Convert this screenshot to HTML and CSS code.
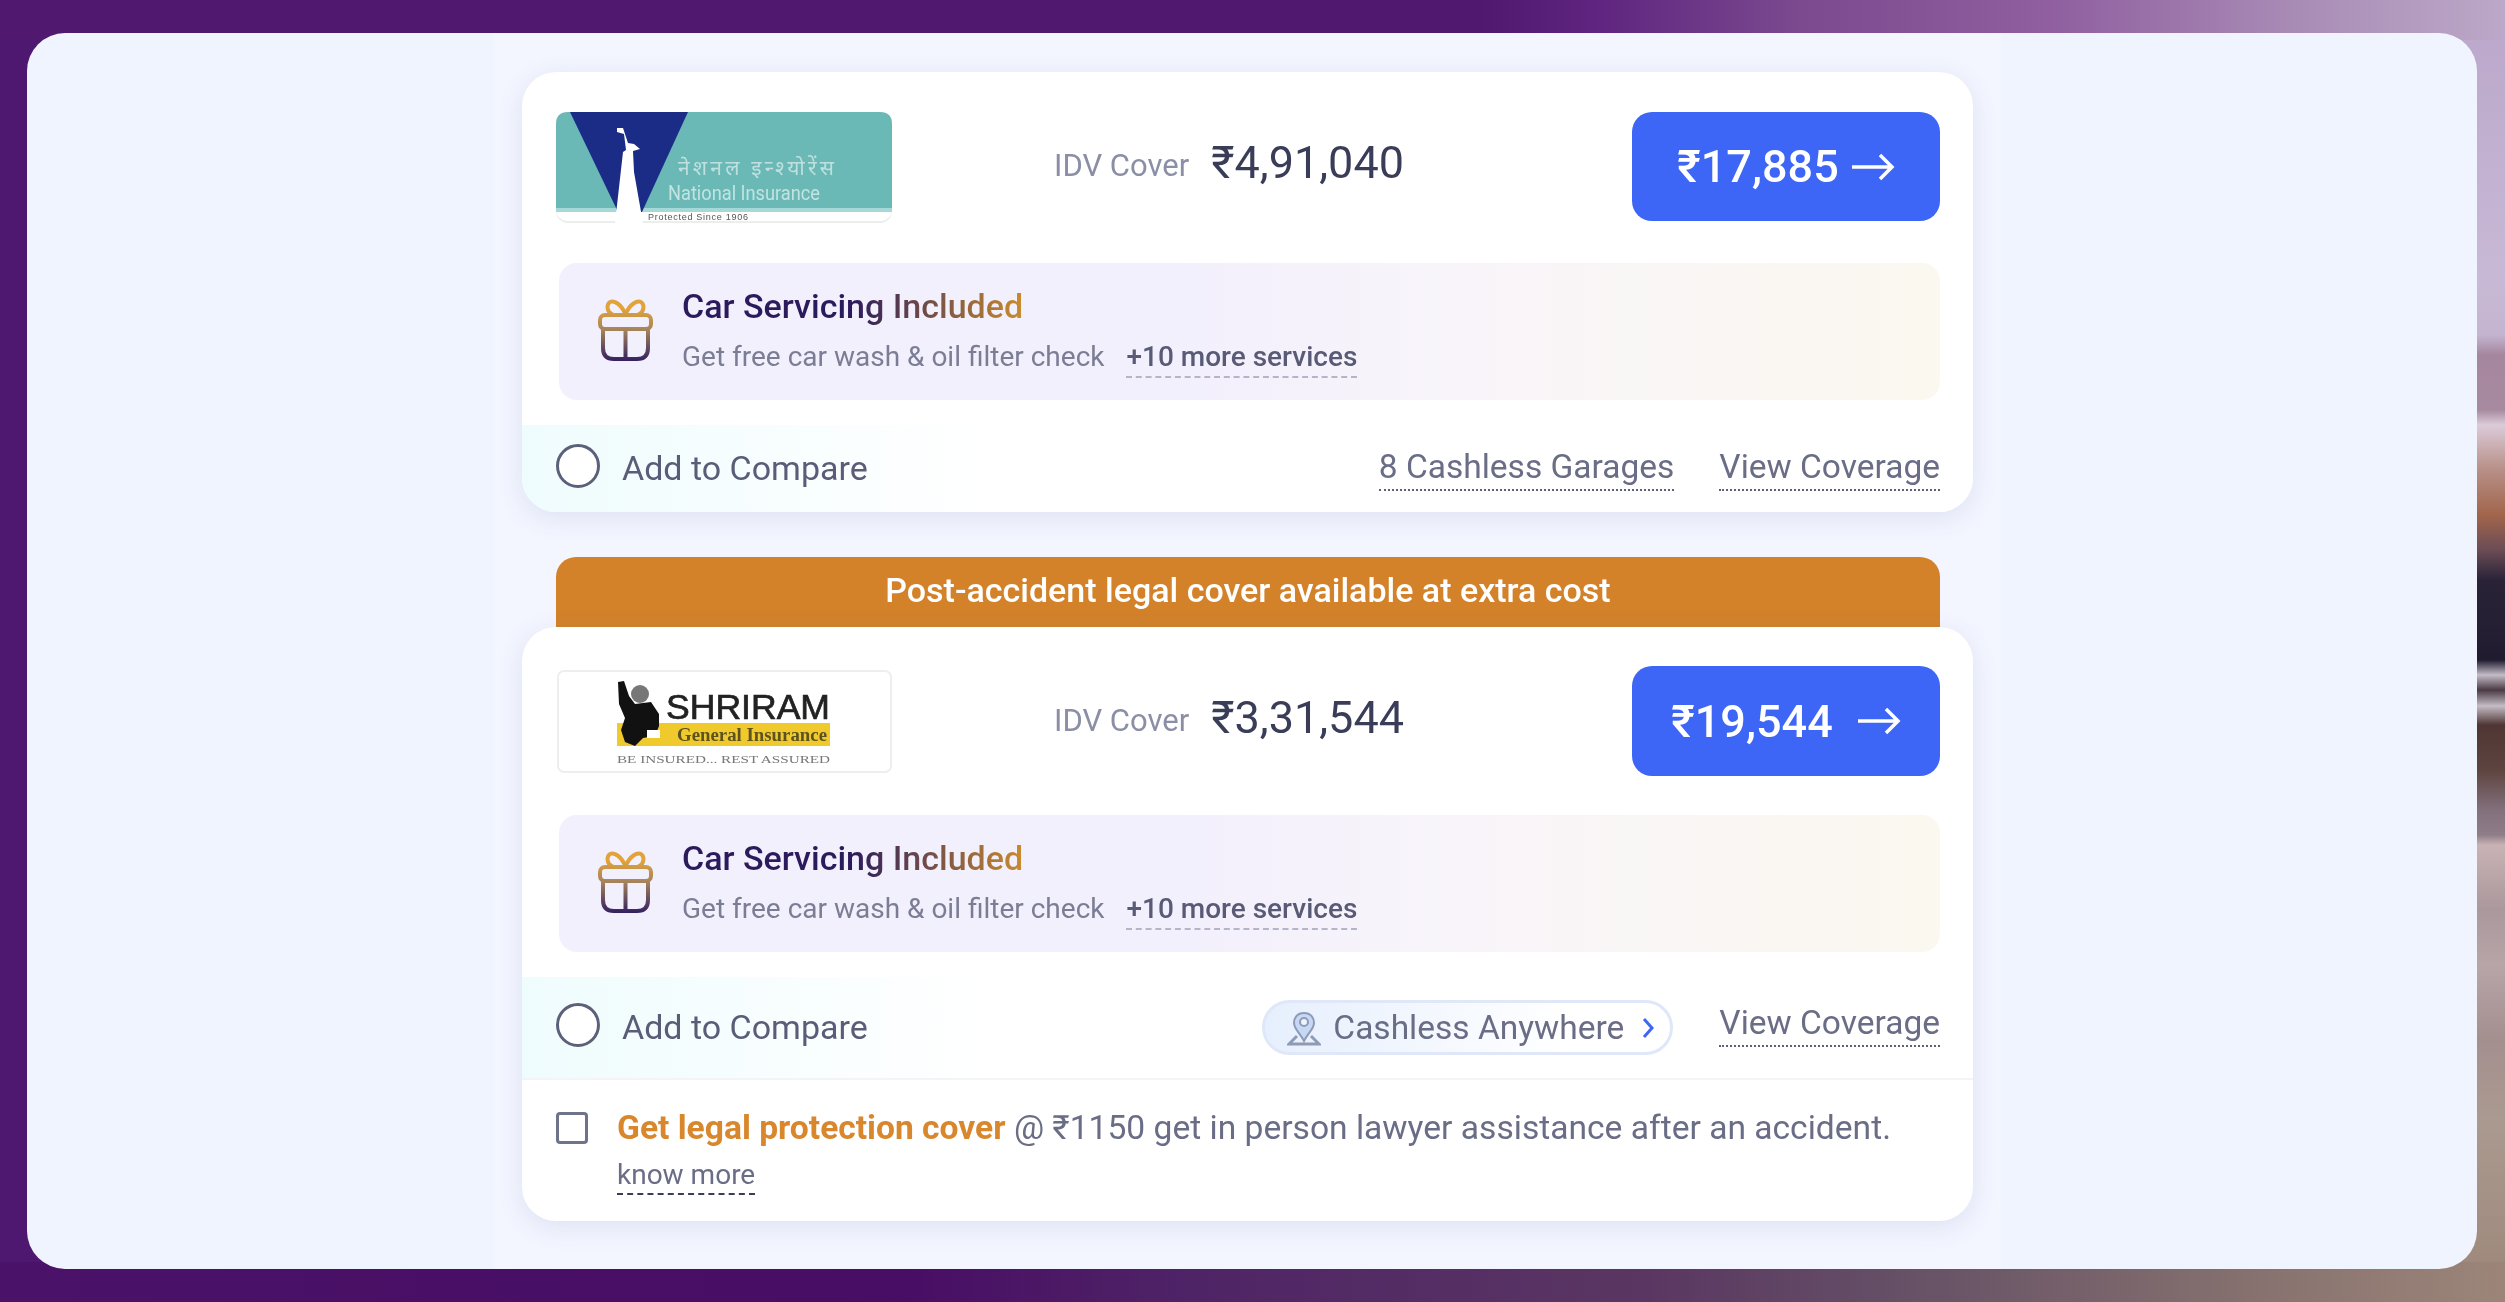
FILE: index.html
```html
<!DOCTYPE html>
<html lang="en">
<head>
    <meta charset="UTF-8">
    <title>Car Insurance Quotes</title>
    <link rel="stylesheet" href="styles.css">
</head>
<body>
    <svg class="defs" width="0" height="0">
        <defs>
            <linearGradient id="gift-grad" gradientUnits="userSpaceOnUse" x1="0" y1="0" x2="0" y2="62">
                <stop offset="0.15" stop-color="#e2a43a"/>
                <stop offset="0.5" stop-color="#a5835c"/>
                <stop offset="1" stop-color="#33205f"/>
            </linearGradient>
            <symbol id="gift" viewBox="0 0 55 62">
                <g fill="none" stroke="url(#gift-grad)" stroke-width="4" stroke-linejoin="round" stroke-linecap="round">
                    <path d="M27.5 15 C23 5 16 1 12 3 C8 6 9 13 14 15"/>
                    <path d="M27.5 15 C32 5 39 1 43 3 C47 6 46 13 41 15"/>
                    <rect x="2" y="16" width="51" height="14" rx="5"/>
                    <path d="M5 31 V49 Q5 60 16 60 H39 Q50 60 50 49 V31"/>
                    <path d="M27.5 31 V60"/>
                </g>
            </symbol>
        </defs>
    </svg>

    <main class="panel">
        <div class="column">

            <!-- National Insurance quote -->
            <section class="card">
                <div class="quote-row">
                    <svg class="logo" viewBox="0 0 336 111">
                        <rect width="336" height="111" rx="12" fill="#eceeee"/>
                        <rect y="0" width="336" height="109" rx="12" fill="#fff"/>
                        <path d="M12 0 H324 Q336 0 336 12 V96 H0 V12 Q0 0 12 0 Z" fill="#6ab9b6"/>
                        <rect y="96" width="336" height="4" fill="#a5d8d6"/>
                        <path d="M14 0 H132 L86 100 H62 Z" fill="#1b2c86"/>
                        <path d="M59 111 L67 40 L70 38 L68 22 L61 20 L61 16 L67 16 L72 31 L78 32 L84 37 L77 39 L78 60 L87 111 Z" fill="#fff"/>
                        <text class="logo-hindi" x="122" y="63" textLength="156">नेशनल इन्श्योरेंस</text>
                        <text class="logo-name" x="112" y="88" textLength="152" lengthAdjust="spacingAndGlyphs">National Insurance</text>
                        <text class="logo-tiny" x="92" y="108" textLength="100">Protected Since 1906</text>
                    </svg>
                    <div class="idv">
                        <span class="idv-label">IDV Cover</span>
                        <span class="idv-value">₹4,91,040</span>
                    </div>
                    <button class="price-btn">
                        <span>₹17,885</span>
                        <svg class="arrow" viewBox="0 0 44 30"><path d="M1 15 H41 M29 3 L41 15 L29 27"/></svg>
                    </button>
                </div>

                <div class="service-box">
                    <svg class="gift-icon"><use href="#gift"/></svg>
                    <div class="service-text">
                        <div class="service-title">Car Servicing Included</div>
                        <div class="service-sub">
                            <span>Get free car wash &amp; oil filter check</span>
                            <span class="more-link">+10 more services</span>
                        </div>
                    </div>
                </div>

                <div class="compare-row">
                    <span class="radio"></span>
                    <span class="compare-label">Add to Compare</span>
                    <span class="compare-links">
                        <a class="dotted-link">8 Cashless Garages</a>
                        <a class="dotted-link">View Coverage</a>
                    </span>
                </div>
            </section>

            <div class="legal-banner">Post-accident legal cover available at extra cost</div>

            <!-- Shriram quote -->
            <section class="card card-second">
                <div class="quote-row">
                    <svg class="logo logo-boxed" viewBox="0 0 335 103">
                        <rect x="1" y="1" width="333" height="101" rx="6" fill="#fff" stroke="#eeeeee" stroke-width="2"/>
                        <rect x="60" y="53" width="213" height="23" fill="#f0c92c"/>
                        <path d="M61 12 L67 11 L72 26 L78 34 L94 32 L102 44 L102 56 L98 66 L86 68 L78 76 L68 72 L64 60 L68 48 L62 34 Z" fill="#111"/>
                        <circle cx="83" cy="24" r="9" fill="#777"/>
                        <rect x="90" y="60" width="13" height="8" fill="#fff"/>
                        <text class="logo-shriram" x="109" y="49" textLength="164" lengthAdjust="spacingAndGlyphs">SHRIRAM</text>
                        <text class="logo-general" x="120" y="71" textLength="150" lengthAdjust="spacingAndGlyphs">General Insurance</text>
                        <text class="logo-tagline" x="60" y="93" textLength="213" lengthAdjust="spacingAndGlyphs">BE INSURED... REST ASSURED</text>
                    </svg>
                    <div class="idv">
                        <span class="idv-label">IDV Cover</span>
                        <span class="idv-value">₹3,31,544</span>
                    </div>
                    <button class="price-btn price-btn-wide">
                        <span>₹19,544</span>
                        <svg class="arrow" viewBox="0 0 44 30"><path d="M1 15 H41 M29 3 L41 15 L29 27"/></svg>
                    </button>
                </div>

                <div class="service-box">
                    <svg class="gift-icon"><use href="#gift"/></svg>
                    <div class="service-text">
                        <div class="service-title">Car Servicing Included</div>
                        <div class="service-sub">
                            <span>Get free car wash &amp; oil filter check</span>
                            <span class="more-link">+10 more services</span>
                        </div>
                    </div>
                </div>

                <div class="compare-row compare-row-tall">
                    <span class="radio"></span>
                    <span class="compare-label">Add to Compare</span>
                    <span class="compare-links">
                        <a class="cashless-pill">
                            <svg class="pin-icon" viewBox="0 0 34 34">
                                <path d="M17 1 C10 1 7 6 7 11 C7 17 13 21 17 29 C21 21 27 17 27 11 C27 6 24 1 17 1 Z" fill="#c7d8f6" stroke="#8d9bb5" stroke-width="2"/>
                                <circle cx="17" cy="10" r="4" fill="#eef3fc" stroke="#8d9bb5" stroke-width="2"/>
                                <path d="M10 24 L2 32 H32 L24 24" fill="none" stroke="#8d9bb5" stroke-width="3"/>
                            </svg>
                            <span>Cashless Anywhere</span>
                            <svg class="chevron" viewBox="0 0 14 22"><path d="M3 2 L11 11 L3 20"/></svg>
                        </a>
                        <a class="dotted-link dotted-link-raised">View Coverage</a>
                    </span>
                </div>

                <div class="legal-row">
                    <span class="checkbox"></span>
                    <div class="legal-text">
                        <p><strong>Get legal protection cover</strong> @ ₹1150 get in person lawyer assistance after an accident.</p>
                        <a class="know-more">know more</a>
                    </div>
                </div>
            </section>

        </div>
    </main>
</body>
</html>
```

FILE: styles.css
```css
* {
    box-sizing: border-box;
}
html, body {
    height: 100%;
}
body {
    margin: 0;
    padding: 33px 28px 33px 27px;
    font-family: Roboto, "Noto Sans", sans-serif;
    background-color: #4e1870;
    background-image:
        linear-gradient(90deg, #50186f 0, #50186f 1480px, #5f2580 1600px, #7b4a8f 1800px, #8f5f9f 2050px, #a98cb6 2300px, #bca8c8 2505px),
        linear-gradient(90deg, #4a1268 0, #480d65 900px, #4f2466 1200px, #5a3762 1650px, #655066 1900px, #86716f 2250px, #9c8578 2505px),
        linear-gradient(180deg, #baa6c9 0, #c8b9d6 280px, #c4b4cf 335px, #a5869f 355px, #a88a9f 410px, #dccbd9 425px, #b78f87 470px, #a2654b 515px, #6b4c55 550px, #2a2338 580px, #201c30 660px, #c4bcc6 675px, #4a3a44 690px, #c4bcc6 706px, #4f3634 725px, #5e443f 770px, #82707c 810px, #8f7d88 835px, #c8b2b4 845px, #ab989c 910px, #b8a5a8 965px, #a48f8f 1040px, #ab9a90 1120px, #9c8578 1302px);
    background-size: 100% 40px, 100% 40px, 60px 100%;
    background-position: left top, left bottom, right top;
    background-repeat: no-repeat;
}
.defs {
    position: absolute;
}
.panel {
    height: 100%;
    border-radius: 38px;
    background: #f0f4fe;
    display: flex;
    justify-content: center;
    overflow: hidden;
}
.column {
    width: 1507px;
    padding: 39px 28px 0;
    margin-left: -9px;
    background: #f3f6ff;
    filter: blur(0.5px);
}

/* Quote card */
.card {
    height: 440px;
    padding-top: 40px;
    background: #fff;
    border-radius: 34px;
    box-shadow: 0 6px 26px rgba(70, 85, 150, 0.12);
    overflow: hidden;
}
.card-second {
    height: 594px;
    padding-top: 39px;
    position: relative;
}
.quote-row {
    display: flex;
    align-items: center;
    padding: 0 33px 0 34px;
    height: 111px;
}
.card-second .quote-row {
    height: 110px;
}
.logo {
    width: 336px;
    height: 111px;
    flex-shrink: 0;
    filter: blur(0.7px);
}
.logo-boxed {
    width: 335px;
    height: 103px;
    margin-left: 1px;
}
.logo-hindi {
    font-family: "Noto Sans", sans-serif;
    font-size: 21px;
    fill: #bfe0de;
}
.logo-name {
    font-family: Roboto, sans-serif;
    font-size: 21px;
    fill: #c3e3e1;
}
.logo-tiny {
    font-family: "Liberation Sans", sans-serif;
    font-size: 9px;
    fill: #555;
}
.logo-shriram {
    font-family: "Liberation Sans", sans-serif;
    font-size: 35px;
    fill: #222;
    stroke: #222;
    stroke-width: 0.7;
}
.logo-general {
    font-family: "Liberation Serif", serif;
    font-weight: bold;
    font-size: 18px;
    fill: #5c5320;
}
.logo-tagline {
    font-family: "Liberation Serif", serif;
    font-size: 11px;
    fill: #777;
}
.idv {
    margin-left: 162px;
    display: flex;
    align-items: center;
    gap: 22px;
}
.card-second .idv {
    margin-top: 3px;
}
.idv-label {
    font-size: 31px;
    color: #8b8fa6;
    margin-top: -4px;
}
.idv-value {
    font-size: 45px;
    color: #3a3d58;
    margin-top: -10px;
}
.price-btn {
    margin-left: auto;
    margin-bottom: 2px;
    width: 308px;
    height: 109px;
    border: none;
    border-radius: 20px;
    background: #3d66f7;
    color: #fff;
    font-family: inherit;
    font-size: 45px;
    font-weight: 500;
    display: flex;
    align-items: center;
    justify-content: center;
    gap: 12px;
    padding: 0;
}
.price-btn-wide {
    height: 110px;
    margin-bottom: 0;
    gap: 24px;
}
.arrow {
    width: 44px;
    height: 30px;
    fill: none;
    stroke: #fff;
    stroke-width: 3.5;
}

/* Car servicing box */
.service-box {
    margin: 40px 33px 0 37px;
    height: 137px;
    border-radius: 18px;
    background: linear-gradient(90deg, #f3f0fd 0, #f3f0fd 45%, #f9f5f8 70%, #fbf8f0 100%);
    display: flex;
    align-items: center;
    padding-left: 39px;
    gap: 29px;
}
.card-second .service-box {
    margin-top: 39px;
}
.gift-icon {
    width: 55px;
    height: 62px;
    flex-shrink: 0;
    margin-top: -4px;
}
.service-title {
    display: inline-block;
    font-size: 34px;
    font-weight: 500;
    line-height: 40px;
    background: linear-gradient(90deg, #2c1b5c 0, #2c1b5c 50%, #c98c2e 100%);
    -webkit-background-clip: text;
    background-clip: text;
    color: transparent;
}
.service-sub {
    margin-top: 13px;
    font-size: 28px;
    line-height: 36px;
    color: #7b7d95;
    display: flex;
    gap: 22px;
}
.more-link {
    font-size: 28px;
    font-weight: 500;
    color: #585a76;
    border-bottom: 2px dashed #b4b6c8;
    height: 39px;
}

/* Compare row */
.compare-row {
    margin-top: 25px;
    height: 87px;
    padding: 0 33px 6px 34px;
    background: linear-gradient(90deg, #effcfd 0, #fff 32%);
    display: flex;
    align-items: center;
}
.compare-row-tall {
    height: 103px;
    padding-bottom: 6px;
    border-bottom: 2px solid #f3f4f7;
}
.radio {
    width: 44px;
    height: 44px;
    border: 3px solid #5d6079;
    border-radius: 50%;
    background: #fff;
    flex-shrink: 0;
}
.compare-label {
    margin-left: 22px;
    font-size: 34px;
    color: #5a5d78;
    padding-top: 4px;
}
.compare-links {
    margin-left: auto;
    display: flex;
    align-items: center;
    gap: 45px;
}
.dotted-link {
    font-size: 33.5px;
    line-height: 40px;
    color: #6a6d86;
    border-bottom: 2px dotted #5d6079;
    padding-bottom: 2px;
    margin-top: 6px;
}
.dotted-link-raised {
    margin-top: 1px;
}
.cashless-pill {
    width: 411px;
    height: 55px;
    margin-top: 6px;
    margin-right: 1px;
    border: 3px solid #dfe7f8;
    border-radius: 28px;
    background: linear-gradient(90deg, #e6effd 0, #fff 75%);
    display: flex;
    align-items: center;
    padding-left: 22px;
    font-size: 33.5px;
    color: #6a6d86;
}
.pin-icon {
    width: 34px;
    height: 34px;
    margin-right: 12px;
    margin-top: 2px;
}
.chevron {
    width: 14px;
    height: 22px;
    margin-left: 17px;
    fill: none;
    stroke: #3d66f7;
    stroke-width: 3;
}

/* Legal cover */
.legal-banner {
    margin: 45px 33px 0 34px;
    height: 70px;
    border-radius: 20px 20px 0 0;
    background: #d38229;
    color: #fff;
    font-size: 34px;
    font-weight: 500;
    text-align: center;
    line-height: 66px;
}
.legal-row {
    padding: 32px 33px 0 34px;
    display: flex;
    gap: 29px;
}
.checkbox {
    width: 32px;
    height: 32px;
    border: 3px solid #6f7389;
    border-radius: 4px;
    flex-shrink: 0;
}
.legal-text p {
    margin: -2px 0 0;
    font-size: 33.6px;
    line-height: 36px;
    color: #6a6d86;
}
.legal-text strong {
    font-weight: 700;
    color: #d9872c;
}
.know-more {
    display: inline-block;
    margin-top: 11px;
    font-size: 28px;
    line-height: 36px;
    color: #6a6d86;
    border-bottom: 2px dashed #3a3d58;
}
```
